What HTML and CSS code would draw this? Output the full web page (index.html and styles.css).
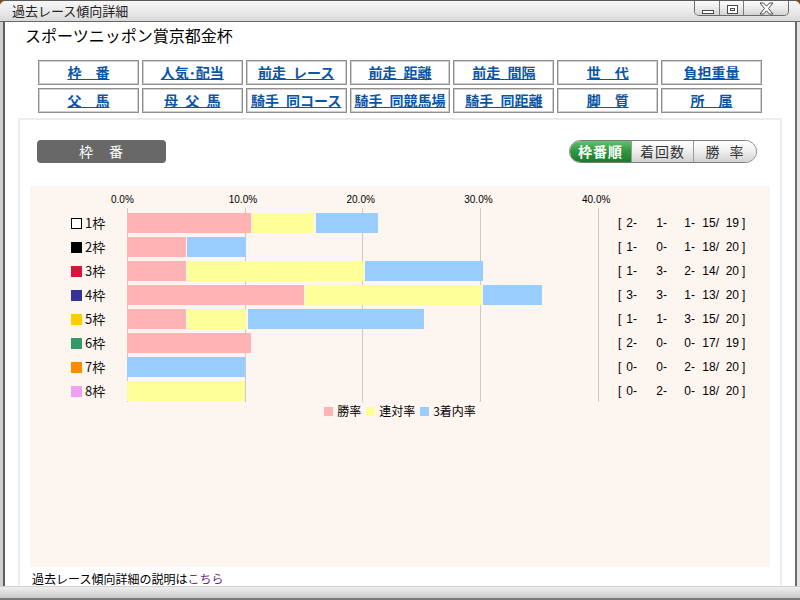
FILE: index.html
```html
<!DOCTYPE html>
<html lang="ja">
<head>
<meta charset="utf-8">
<title>過去レース傾向詳細</title>
<link rel="stylesheet" href="styles.css">
</head>
<body>
<div class="window">
  <div class="titlebar">
    <span class="title-text">過去レース傾向詳細</span>
    <div class="wincontrols">
      <span class="wbtn wbtn-min"><svg width="24" height="17" viewBox="0 0 24 17"><rect x="7.5" y="10.5" width="11" height="3" fill="#fff" stroke="#4a4a4a"/></svg></span>
      <span class="wbtn wbtn-max"><svg width="24" height="17" viewBox="0 0 24 17"><rect x="7.5" y="5.5" width="10" height="8" fill="#fff" stroke="#4a4a4a"/><rect x="10.5" y="8.5" width="4" height="2" fill="none" stroke="#4a4a4a"/></svg></span>
      <span class="wbtn wbtn-close"><svg width="45" height="17" viewBox="0 0 45 17"><polygon points="16,3 19.5,3 22.5,6.2 25.5,3 29,3 24.5,8.5 29,14 25.5,14 22.5,10.8 19.5,14 16,14 20.5,8.5" fill="#fff" stroke="#4a4a4a" stroke-linejoin="round"/></svg></span>
    </div>
  </div>
  <div class="frame">
    <div class="client">
      <h1 class="race-name">スポーツニッポン賞京都金杯</h1>
      <nav class="tabs">
        <a class="tab" href="#">枠　番</a>
        <a class="tab" href="#">人気･配当</a>
        <a class="tab" href="#">前走 レース</a>
        <a class="tab" href="#">前走 距離</a>
        <a class="tab" href="#">前走 間隔</a>
        <a class="tab" href="#">世　代</a>
        <a class="tab" href="#">負担重量</a>
        <a class="tab" href="#">父　馬</a>
        <a class="tab" href="#">母 父 馬</a>
        <a class="tab" href="#">騎手 同コース</a>
        <a class="tab" href="#">騎手 同競馬場</a>
        <a class="tab" href="#">騎手 同距離</a>
        <a class="tab" href="#">脚　質</a>
        <a class="tab" href="#">所　属</a>
      </nav>
      <section class="panel">
        <div class="panel-head">
          <div class="badge">枠　番</div>
          <div class="toggle">
            <span class="tog tog-on">枠番順</span>
            <span class="tog">着回数</span>
            <span class="tog tog-last">勝 率</span>
          </div>
        </div>
        <div class="chart">
          <div class="axis">
            <span class="tick">0.0%</span>
            <span class="tick">10.0%</span>
            <span class="tick">20.0%</span>
            <span class="tick">30.0%</span>
            <span class="tick tick-last">40.0%</span>
          </div>
          <div class="chart-body">
            <div class="labels">
              <div class="lbl"><i class="sw sw1"></i>1枠</div>
              <div class="lbl"><i class="sw sw2"></i>2枠</div>
              <div class="lbl"><i class="sw sw3"></i>3枠</div>
              <div class="lbl"><i class="sw sw4"></i>4枠</div>
              <div class="lbl"><i class="sw sw5"></i>5枠</div>
              <div class="lbl"><i class="sw sw6"></i>6枠</div>
              <div class="lbl"><i class="sw sw7"></i>7枠</div>
              <div class="lbl"><i class="sw sw8"></i>8枠</div>
            </div>
            <div class="plot">
              <div class="bar"><span class="seg win" style="width:123.9px"></span><span class="seg ren" style="width:62px"></span><span class="seg fuku" style="width:62px"></span></div>
              <div class="bar"><span class="seg win" style="width:58.9px"></span><span class="seg fuku" style="width:58.9px"></span></div>
              <div class="bar"><span class="seg win" style="width:58.9px"></span><span class="seg ren" style="width:176.6px"></span><span class="seg fuku" style="width:117.75px"></span></div>
              <div class="bar"><span class="seg win" style="width:176.6px"></span><span class="seg ren" style="width:176.6px"></span><span class="seg fuku" style="width:58.9px"></span></div>
              <div class="bar"><span class="seg win" style="width:58.9px"></span><span class="seg ren" style="width:58.9px"></span><span class="seg fuku" style="width:176.6px"></span></div>
              <div class="bar"><span class="seg win" style="width:123.9px"></span></div>
              <div class="bar"><span class="seg fuku" style="width:117.75px"></span></div>
              <div class="bar"><span class="seg ren" style="width:117.75px"></span></div>
            </div>
            <div class="stats">
              <div class="st"><span>[</span><span>2-</span><span>1-</span><span>1-</span><span>15/</span><span>19</span><span class="cl">]</span></div>
              <div class="st"><span>[</span><span>1-</span><span>0-</span><span>1-</span><span>18/</span><span>20</span><span class="cl">]</span></div>
              <div class="st"><span>[</span><span>1-</span><span>3-</span><span>2-</span><span>14/</span><span>20</span><span class="cl">]</span></div>
              <div class="st"><span>[</span><span>3-</span><span>3-</span><span>1-</span><span>13/</span><span>20</span><span class="cl">]</span></div>
              <div class="st"><span>[</span><span>1-</span><span>1-</span><span>3-</span><span>15/</span><span>20</span><span class="cl">]</span></div>
              <div class="st"><span>[</span><span>2-</span><span>0-</span><span>0-</span><span>17/</span><span>19</span><span class="cl">]</span></div>
              <div class="st"><span>[</span><span>0-</span><span>0-</span><span>2-</span><span>18/</span><span>20</span><span class="cl">]</span></div>
              <div class="st"><span>[</span><span>0-</span><span>2-</span><span>0-</span><span>18/</span><span>20</span><span class="cl">]</span></div>
            </div>
          </div>
          <div class="legend">
            <span class="lg"><i class="lsw win"></i>勝率</span>
            <span class="lg"><i class="lsw ren"></i>連対率</span>
            <span class="lg"><i class="lsw fuku"></i>3着内率</span>
          </div>
        </div>
        <p class="note">過去レース傾向詳細の説明は<a class="note-link" href="#">こちら</a></p>
      </section>
    </div>
  </div>
  <div class="statusbar"></div>
</div>
</body>
</html>
```

FILE: styles.css
```css
* { box-sizing: border-box; }

html, body {
  margin: 0;
  padding: 0;
}

body {
  width: 800px;
  height: 600px;
  overflow: hidden;
  background: #7a4b1f;
  font-family: "Noto Sans CJK JP", "DejaVu Sans", sans-serif;
  color: #000;
}

.window {
  width: 800px;
  height: 600px;
  display: flex;
  flex-direction: column;
  background: #d8d8d8;
  border-radius: 6px 6px 0 0;
  overflow: hidden;
  border-top: 1px solid #5a5a5a;
}

/* title bar */
.titlebar {
  height: 21px;
  flex: none;
  display: flex;
  justify-content: space-between;
  align-items: flex-start;
  background: linear-gradient(#f7f7f7, #ececec 45%, #d9d9d9);
  border-bottom: 1px solid #666;
  padding: 0 11px 0 12px;
}

.title-text {
  font-size: 13px;
  line-height: 19px;
  color: #222;
}

.wincontrols {
  display: flex;
  height: 16px;
  border: 1px solid #6a6a6a;
  border-top: none;
  border-radius: 0 0 5px 5px;
  overflow: hidden;
  margin-top: -1px;
}

.wbtn {
  display: block;
  height: 16px;
  background: linear-gradient(#ffffff, #ececec 50%, #cfcfcf);
  border-left: 1px solid #7a7a7a;
}

.wbtn:first-child { border-left: none; }

.wbtn svg { display: block; }

.wbtn-min, .wbtn-max { width: 24px; }
.wbtn-close { width: 45px; }

/* frame */
.frame {
  flex: 1;
  display: flex;
  padding: 0 3px;
  background: linear-gradient(to right, #cfcfcf, #e4e4e4);
  min-height: 0;
}

.client {
  flex: 1;
  background: #fff;
  border-left: 2px solid #5e5e5e;
  border-right: 2px solid #6a6a6a;
  overflow: hidden;
}

.race-name {
  margin: 3px 0 0 20px;
  font-size: 16px;
  line-height: 20px;
  font-weight: normal;
  color: #000;
}

/* tabs */
.tabs {
  margin: 15px 0 0 33px;
  width: 724px;
  display: grid;
  grid-template-columns: repeat(7, 1fr);
  grid-auto-rows: 25px;
  gap: 3px 3px;
}

.tab {
  display: flex;
  align-items: center;
  justify-content: center;
  border: 1px solid #8e8e8e;
  box-shadow: inset 0 0 0 1px #cfcfcf;
  background: #fff;
  color: #0b55a6;
  font-size: 14px;
  font-weight: bold;
  text-decoration: underline;
  text-underline-offset: 1px;
  word-spacing: 4px;
  white-space: nowrap;
  padding-bottom: 1px;
}

/* panel */
.panel {
  margin: 5px 13px 0 13px;
  border: 2px solid #ececec;
  border-bottom: none;
  padding: 20px 10px 0 10px;
  height: 600px;
}

.panel-head {
  display: flex;
  justify-content: space-between;
  align-items: center;
  padding: 0 13px 0 7px;
  height: 22px;
}

.badge {
  width: 129px;
  height: 23px;
  background: #686868;
  border-radius: 4px;
  color: #fff;
  font-size: 14px;
  line-height: 23px;
  text-align: center;
  letter-spacing: 1px;
}

.toggle {
  display: flex;
  height: 23px;
  border: 1px solid #7c7c7c;
  border-radius: 12px;
  overflow: hidden;
}

.tog {
  display: flex;
  align-items: center;
  justify-content: center;
  height: 21px;
  width: 62px;
  font-size: 14px;
  letter-spacing: 1px;
  color: #333;
  background: linear-gradient(#ffffff, #f0f0f0 45%, #d3d3d3);
  border-left: 1px solid #9c9c9c;
  white-space: pre;
}

.tog-on {
  width: 61px;
  border-left: none;
  color: #fff;
  font-weight: bold;
  background: linear-gradient(#67c06f, #2f9a41 45%, #1d7a2d);
}

.tog-last {
  width: 63px;
  word-spacing: 5px;
}

/* chart */
.chart {
  margin-top: 24px;
  height: 381px;
  background: #fdf5ef;
}

.axis {
  display: flex;
  height: 22px;
  padding: 8px 0 0 81px;
  font-family: "Liberation Sans", Arial, sans-serif;
  font-size: 10px;
  line-height: 12px;
}

.tick {
  flex: none;
  width: 117.75px;
}

.tick-last { width: auto; }

.chart-body {
  display: flex;
  align-items: flex-start;
}

.labels, .plot, .stats {
  display: flex;
  flex-direction: column;
  gap: 4px;
  padding: 5px 0 1px;
}

.labels {
  width: 97px;
  padding-left: 41px;
}

.lbl {
  height: 20px;
  display: flex;
  align-items: center;
  font-size: 13px;
  line-height: 20px;
  color: #111;
}

.sw {
  display: block;
  width: 11px;
  height: 11px;
  margin-right: 3px;
}

.sw1 { background: #fff; border: 1px solid #000; }
.sw2 { background: #000; }
.sw3 { background: #dc143c; }
.sw4 { background: #333399; }
.sw5 { background: #ffcc00; }
.sw6 { background: #339966; }
.sw7 { background: #ff8c00; }
.sw8 { background: #f0a0f0; }

.plot {
  width: 472px;
  background-image: repeating-linear-gradient(to right, #cacaca 0, #cacaca 1px, transparent 1px, transparent 117.75px);
}

.bar {
  height: 20px;
  display: flex;
  gap: 1.5px;
}

.seg {
  display: block;
  height: 20px;
  flex: none;
}

.win { background: #ffb3b3; }
.ren { background: #ffff99; }
.fuku { background: #99ccff; }

.stats {
  margin-left: 19px;
  font-family: "Liberation Sans", Arial, sans-serif;
  font-size: 12px;
}

.st {
  height: 20px;
  display: grid;
  grid-template-columns: 5px 14px 30px 28px 24px 20px auto;
  align-items: center;
  text-align: right;
  line-height: 20px;
}

.st span:first-child { text-align: left; }

.st .cl {
  text-align: left;
  padding-left: 3px;
}

.legend {
  margin-top: 2px;
  display: flex;
  justify-content: center;
  gap: 5px;
  font-size: 12px;
  line-height: 14px;
}

.lg {
  display: flex;
  align-items: center;
}

.lsw {
  display: block;
  width: 9px;
  height: 9px;
  margin-right: 4px;
}

.note {
  margin: 4px 0 0 2px;
  font-size: 12px;
  line-height: 16px;
}

.note-link {
  color: #6b2c8c;
  text-decoration: none;
}

.statusbar {
  height: 14px;
  flex: none;
  background: linear-gradient(#f0f0f0, #dcdcdc 50%, #c9c9c9);
  border-top: 1px solid #cfcfcf;
  border-bottom: 2px solid #7a7a7a;
}
```
